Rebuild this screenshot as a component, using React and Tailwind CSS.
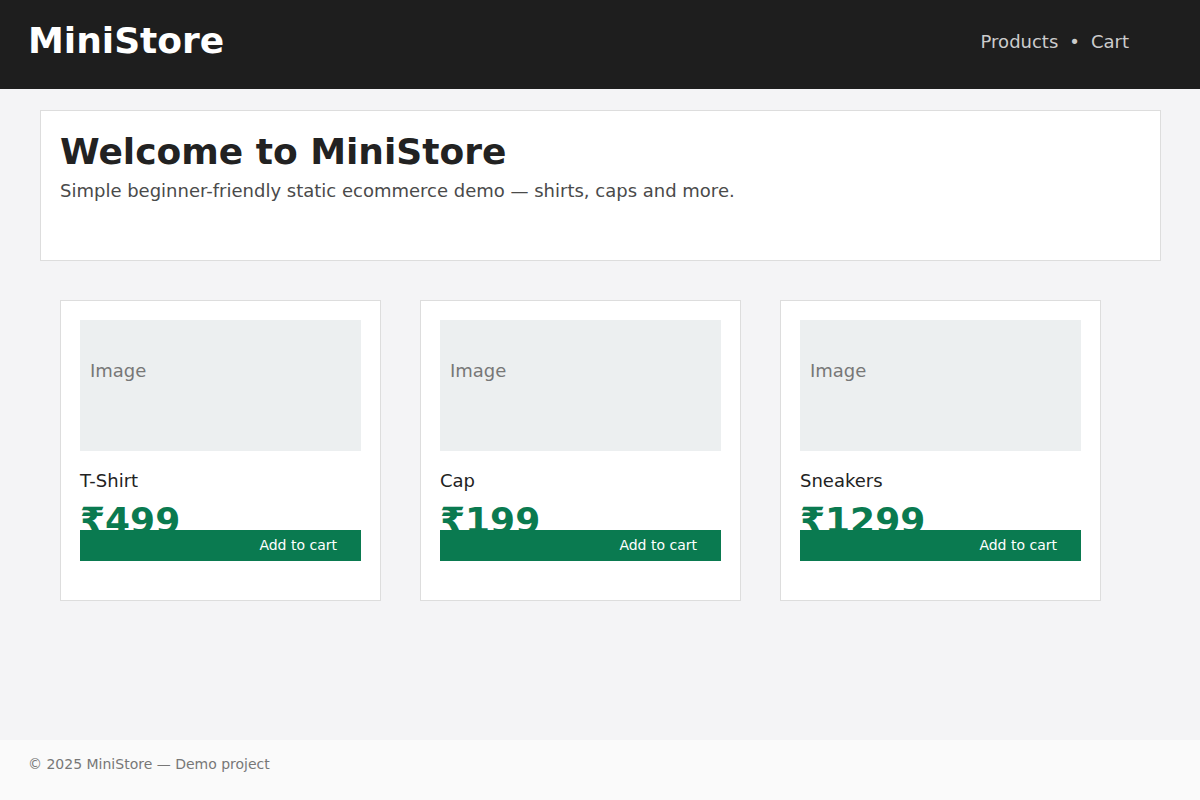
import React from "react";

const products = [
  { id: 1, name: "T-Shirt", price: "₹499" },
  { id: 2, name: "Cap", price: "₹199" },
  { id: 3, name: "Sneakers", price: "₹1299" },
];

function ProductCard({ product }) {
  return (
    <div className="flex h-[301px] w-[321px] flex-col border border-[#dddddd] bg-white p-[19px]">
      <div className="h-[131px] w-full bg-[#eceff0] pl-[10px] pt-[40px] text-[18px] leading-[21px] text-[#777777]">
        Image
      </div>
      <div className="mt-[19px] text-[18px] leading-[21px] text-[#222222]">{product.name}</div>
      <div className="mt-[9px] h-[30px] text-[36px] font-bold leading-[42px] text-[#0a7a50]">{product.price}</div>
      <button className="relative flex h-[31px] w-full items-center justify-end bg-[#0a7a50] pr-6 text-[14px] text-white">
        Add to cart
      </button>
    </div>
  );
}

export default function App() {
  return (
    <div className="flex h-screen flex-col bg-[#f4f4f6] font-['DejaVu_Sans',sans-serif]">
      <header className="flex h-[89px] shrink-0 items-start justify-between bg-[#1e1e1e] pl-7 pr-[71px] pt-5">
        <div className="text-[36px] font-bold leading-[42px] text-white">MiniStore</div>
        <nav className="flex h-[42px] items-center gap-[11px] text-[18px] text-[#cccccc]">
          <span>Products</span>
          <span>•</span>
          <span>Cart</span>
        </nav>
      </header>

      <main className="flex-1 pl-10 pr-[39px] pt-[21px]">
        <section className="h-[151px] border border-[#dddddd] bg-white py-5 pl-[19px] pr-5">
          <h1 className="text-[36px] font-bold leading-[42px] text-[#222222]">Welcome to MiniStore</h1>
          <p className="mt-[7px] text-[18px] leading-[21px] text-[#4a4a4a]">
            Simple beginner-friendly static ecommerce demo — shirts, caps and more.
          </p>
        </section>

        <div className="mt-[39px] flex gap-[39px] px-5">
          {products.map((p) => (
            <ProductCard key={p.id} product={p} />
          ))}
        </div>
      </main>

      <footer className="h-[60px] shrink-0 bg-[#fafafa] px-7 pt-4 text-[14px] leading-4 text-[#777777]">
        © 2025 MiniStore — Demo project
      </footer>
    </div>
  );
}
